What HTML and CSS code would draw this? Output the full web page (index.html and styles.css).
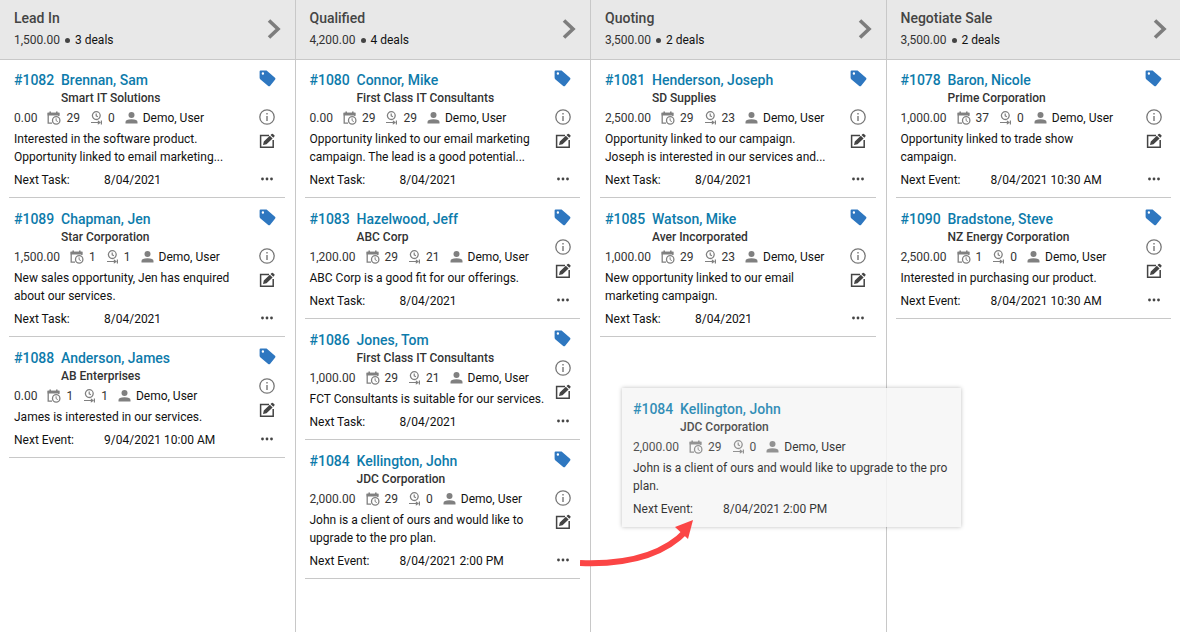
FILE: index.html
```html
<!DOCTYPE html>
<html lang="en">
<head>
    <meta charset="UTF-8">
    <meta name="viewport" content="width=device-width, initial-scale=1.0">
    <title>Sales Pipeline</title>
    <link rel="stylesheet" href="styles.css">
</head>
<body>
    <main class="board" id="board"></main>

    <!-- Card being dragged -->
    <div class="drag-card" id="dragCard"></div>

    <svg class="drag-arrow" viewBox="0 0 116 50" aria-hidden="true">
        <path d="M0 45 C50 47 85 36 107 12" fill="none" stroke="#fb4545" stroke-width="6"/>
        <path d="M113 2 L95 9 L108 21 Z" fill="#fb4545"/>
    </svg>

    <script src="script.js"></script>
</body>
</html>
```
FILE: styles.css
```css
* {
    box-sizing: border-box;
}

body {
    margin: 0;
    min-height: 100vh;
    position: relative;
    overflow: hidden;
    background: #fff;
    color: #111;
    font-family: Roboto, "Open Sans", sans-serif;
    font-size: 12px;
}

button {
    display: flex;
    padding: 0;
    border: none;
    background: none;
    color: #444;
    cursor: pointer;
}

svg {
    display: block;
}

.board {
    display: grid;
    grid-template-columns: repeat(4, 1fr);
    width: calc(100% + 2px);
    min-height: 100vh;
}

.column + .column {
    margin-left: -1px;
    border-left: 1px solid #c8c8c8;
}

.column-header {
    display: flex;
    justify-content: space-between;
    align-items: center;
    height: 60px;
    padding: 0 15px 0 14px;
    background: #e8e8e8;
    border-bottom: 1px solid #c8c8c8;
}

.column-header h2 {
    margin: 0;
    font-size: 14px;
    line-height: 22px;
    font-weight: 500;
    color: #444;
}

.column-header p {
    display: flex;
    align-items: center;
    gap: 5px;
    margin: 0;
    line-height: 23px;
}

.column-header button {
    margin-bottom: 2px;
}

.total {
    color: #333;
}

.dot {
    width: 5px;
    height: 5px;
    border-radius: 50%;
    background: #444;
}

.card {
    display: flex;
    justify-content: space-between;
    margin: 0 11px 0 9px;
    padding: 10px 9px 7px 5px;
    border-bottom: 1px solid #c8c8c8;
}

.card + .card {
    padding-top: 11px;
}

.card-title {
    display: flex;
    margin: 0;
    font-size: 14px;
    line-height: 20px;
    font-weight: 500;
}

.card-title a {
    color: #0d7bab;
    text-decoration: none;
}

.card-title a:hover {
    text-decoration: underline;
}

.card-title a:first-child {
    width: 47px;
}

.company {
    margin: 0 0 0 47px;
    line-height: 16px;
    font-weight: 500;
    color: #333;
}

.stats {
    display: flex;
    align-items: center;
    height: 24px;
    color: #333;
}

.stats svg {
    margin: 0 5px 0 10px;
    color: #808080;
}

.owner {
    color: #111;
}

.note {
    margin: 0;
    line-height: 18px;
    white-space: nowrap;
}

.next {
    display: flex;
    margin: 4px 0 0;
    line-height: 20px;
}

.next span:first-child {
    width: 90px;
}

.card-actions {
    display: flex;
    flex-direction: column;
    justify-content: space-between;
    align-items: center;
    width: 17px;
    padding-bottom: 3px;
}

.card-actions .tag {
    color: #2e77c0;
}

.card-actions .middle {
    display: flex;
    flex-direction: column;
    align-items: center;
    gap: 8px;
}

.card-actions .info {
    color: #777;
}

.drag-card {
    position: absolute;
    left: 622px;
    top: 388px;
    width: 339px;
    padding: 11px 11px 8px;
    background: #f6f6f6;
    box-shadow: 0 0 4px rgba(0, 0, 0, 0.3);
    opacity: 0.85;
}

.drag-arrow {
    position: absolute;
    left: 580px;
    top: 518px;
    width: 116px;
    height: 50px;
}
```
FILE: script.js
```javascript
const icons = {
    chevron: '<svg width="14" height="20" viewBox="0 0 14 20"><path d="M2 1.5 L11 10 L2 18.5" fill="none" stroke="#7d7d7d" stroke-width="3.6"/></svg>',
    tag: '<svg width="17" height="17" viewBox="0 0 17 17"><path fill="currentColor" fill-rule="evenodd" d="M1.6 0.4 H7.6 L16 7.8 Q17 8.8 16 9.8 L11.2 15.7 Q10.2 16.7 9.2 15.9 L1.2 9.2 Q0.6 8.6 0.6 7.8 V1.4 Q0.6 0.4 1.6 0.4 Z M3.9 2.3 A1.2 1.2 0 1 0 3.9 4.7 A1.2 1.2 0 1 0 3.9 2.3 Z"/></svg>',
    info: '<svg width="16" height="16" viewBox="0 0 16 16"><circle cx="8" cy="8" r="7.2" fill="none" stroke="currentColor" stroke-width="1.3"/><path d="M8 7 V12 M8 4 V5.6" stroke="currentColor" stroke-width="1.4"/></svg>',
    edit: '<svg width="16" height="16" viewBox="0 0 16 16"><path d="M10 2.6 H1.6 V14.2 H14.2 V7" fill="none" stroke="currentColor" stroke-width="1.5"/><path fill="currentColor" d="M4 12 L4.8 8.5 L10.8 2.7 L13.6 5.4 L7.5 11.2 Z M11.5 2 L12.7 0.9 Q13.3 0.4 13.9 0.9 L15.4 2.3 Q15.9 2.9 15.4 3.5 L14.3 4.7 Z"/></svg>',
    more: '<svg width="16" height="16" viewBox="0 0 16 16"><g fill="currentColor"><circle cx="3.5" cy="8" r="1.4"/><circle cx="8" cy="8" r="1.4"/><circle cx="12.5" cy="8" r="1.4"/></g></svg>',
    age: '<svg width="14" height="14" viewBox="0 0 14 14"><path d="M5 12.2 H1.2 V2.5 H11.8 V5" fill="none" stroke="currentColor" stroke-width="1.3"/><path d="M0.6 1.8 H12.4 V4.4 H0.6 Z M2.4 0.4 H4 V3 H2.4 Z M9 0.4 H10.6 V3 H9 Z" fill="currentColor"/><circle cx="9.2" cy="9.4" r="3.7" fill="none" stroke="currentColor" stroke-width="1.3"/><path d="M9.1 7.3 V9.6 L10.8 10.6" fill="none" stroke="currentColor"/></svg>',
    stage: '<svg width="13" height="14" viewBox="0 0 13 14"><circle cx="6.3" cy="4.6" r="3.9" fill="none" stroke="currentColor" stroke-width="1.3"/><path d="M6.2 2.4 V4.9 L7.9 5.7 M1 11.5 H9 M11.4 9.4 V13.6" fill="none" stroke="currentColor" stroke-width="1.2"/><path d="M7.8 9.2 L11 11.5 L7.8 13.8 Z" fill="currentColor"/></svg>',
    user: '<svg width="13" height="14" viewBox="0 0 13 14"><circle cx="6.5" cy="4" r="3" fill="currentColor"/><path d="M0.5 12.6 V11 Q0.5 8.3 6.5 8.3 Q12.5 8.3 12.5 11 V12.6 Z" fill="currentColor"/></svg>'
};

const columns = [
    { name: "Lead In", total: "1,500.00", deals: [
        { id: 1082, contact: "Brennan, Sam", company: "Smart IT Solutions", value: "0.00", age: 29, stage: 0, note: ["Interested in the software product.", "Opportunity linked to email marketing..."], type: "Task", when: "8/04/2021" },
        { id: 1089, contact: "Chapman, Jen", company: "Star Corporation", value: "1,500.00", age: 1, stage: 1, note: ["New sales opportunity, Jen has enquired", "about our services."], type: "Task", when: "8/04/2021" },
        { id: 1088, contact: "Anderson, James", company: "AB Enterprises", value: "0.00", age: 1, stage: 1, note: ["James is interested in our services."], type: "Event", when: "9/04/2021 10:00 AM" }
    ] },
    { name: "Qualified", total: "4,200.00", deals: [
        { id: 1080, contact: "Connor, Mike", company: "First Class IT Consultants", value: "0.00", age: 29, stage: 29, note: ["Opportunity linked to our email marketing", "campaign. The lead is a good potential..."], type: "Task", when: "8/04/2021" },
        { id: 1083, contact: "Hazelwood, Jeff", company: "ABC Corp", value: "1,200.00", age: 29, stage: 21, note: ["ABC Corp is a good fit for our offerings."], type: "Task", when: "8/04/2021" },
        { id: 1086, contact: "Jones, Tom", company: "First Class IT Consultants", value: "1,000.00", age: 29, stage: 21, note: ["FCT Consultants is suitable for our services."], type: "Task", when: "8/04/2021" },
        { id: 1084, contact: "Kellington, John", company: "JDC Corporation", value: "2,000.00", age: 29, stage: 0, note: ["John is a client of ours and would like to", "upgrade to the pro plan."], type: "Event", when: "8/04/2021 2:00 PM" }
    ] },
    { name: "Quoting", total: "3,500.00", deals: [
        { id: 1081, contact: "Henderson, Joseph", company: "SD Supplies", value: "2,500.00", age: 29, stage: 23, note: ["Opportunity linked to our campaign.", "Joseph is interested in our services and..."], type: "Task", when: "8/04/2021" },
        { id: 1085, contact: "Watson, Mike", company: "Aver Incorporated", value: "1,000.00", age: 29, stage: 23, note: ["New opportunity linked to our email", "marketing campaign."], type: "Task", when: "8/04/2021" }
    ] },
    { name: "Negotiate Sale", total: "3,500.00", deals: [
        { id: 1078, contact: "Baron, Nicole", company: "Prime Corporation", value: "1,000.00", age: 37, stage: 0, note: ["Opportunity linked to trade show", "campaign."], type: "Event", when: "8/04/2021 10:30 AM" },
        { id: 1090, contact: "Bradstone, Steve", company: "NZ Energy Corporation", value: "2,500.00", age: 1, stage: 0, note: ["Interested in purchasing our product."], type: "Event", when: "8/04/2021 10:30 AM" }
    ] }
];

function cardBody(deal) {
    return `
        <div class="card-body">
            <h3 class="card-title"><a href="#${deal.id}">#${deal.id}</a><a href="#${deal.id}">${deal.contact}</a></h3>
            <p class="company">${deal.company}</p>
            <div class="stats">
                <span>${deal.value}</span>${icons.age}<span>${deal.age}</span>${icons.stage}<span>${deal.stage}</span>${icons.user}<span class="owner">Demo, User</span>
            </div>
            <p class="note">${deal.note.join("<br>")}</p>
            <p class="next"><span>Next ${deal.type}:</span><span>${deal.when}</span></p>
        </div>`;
}

function card(deal) {
    return `
        <article class="card">
            ${cardBody(deal)}
            <div class="card-actions">
                <button class="tag" aria-label="Tags">${icons.tag}</button>
                <div class="middle">
                    <button class="info" aria-label="Details">${icons.info}</button>
                    <button aria-label="Edit">${icons.edit}</button>
                </div>
                <button aria-label="More">${icons.more}</button>
            </div>
        </article>`;
}

function column(col) {
    return `
        <section class="column">
            <header class="column-header">
                <div>
                    <h2>${col.name}</h2>
                    <p><span class="total">${col.total}</span><i class="dot"></i><span>${col.deals.length} deals</span></p>
                </div>
                <button aria-label="Open ${col.name}">${icons.chevron}</button>
            </header>
            ${col.deals.map(card).join("")}
        </section>`;
}

document.getElementById("board").innerHTML = columns.map(column).join("");

// The dragged card is wider, so its note wraps later
const dragged = columns[1].deals[3];
document.getElementById("dragCard").innerHTML = cardBody({
    ...dragged,
    note: ["John is a client of ours and would like to upgrade to the pro", "plan."]
});
```
